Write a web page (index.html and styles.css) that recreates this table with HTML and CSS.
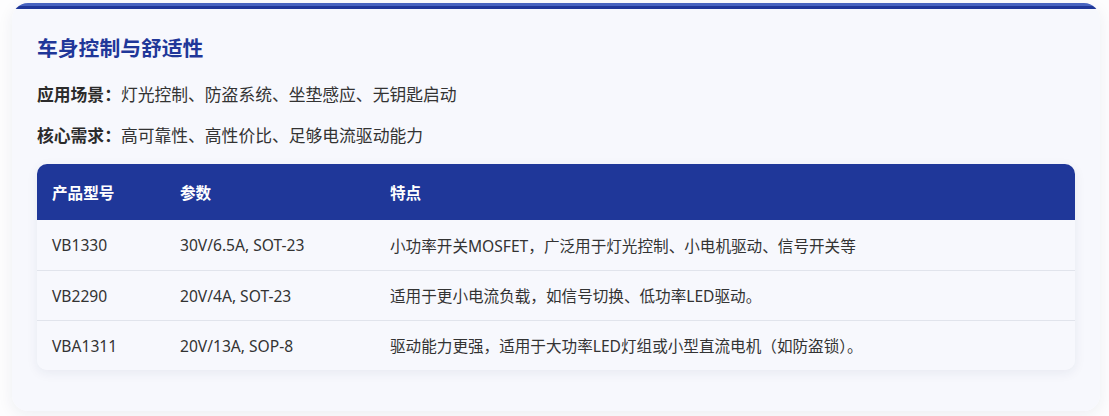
FILE: index.html
```html
<!DOCTYPE html>
<html lang="zh-CN">
<head>
  <meta charset="UTF-8">
  <title>车身控制与舒适性</title>
  <link rel="stylesheet" href="styles.css">
</head>
<body>
  <div class="card">
    <h3>车身控制与舒适性</h3>
    <p><strong>应用场景：</strong>灯光控制、防盗系统、坐垫感应、无钥匙启动</p>
    <p><strong>核心需求：</strong>高可靠性、高性价比、足够电流驱动能力</p>

    <table>
      <thead>
        <tr>
          <th class="col-model">产品型号</th>
          <th class="col-param">参数</th>
          <th>特点</th>
        </tr>
      </thead>
      <tbody>
        <tr>
          <td>VB1330</td>
          <td>30V/6.5A, SOT-23</td>
          <td>小功率开关MOSFET，广泛用于灯光控制、小电机驱动、信号开关等</td>
        </tr>
        <tr>
          <td>VB2290</td>
          <td>20V/4A, SOT-23</td>
          <td>适用于更小电流负载，如信号切换、低功率LED驱动。</td>
        </tr>
        <tr>
          <td>VBA1311</td>
          <td>20V/13A, SOP-8</td>
          <td>驱动能力更强，适用于大功率LED灯组或小型直流电机（如防盗锁）。</td>
        </tr>
      </tbody>
    </table>
  </div>
</body>
</html>
```

FILE: styles.css
```css
body {
  margin: 0;
  padding: 3px 9px 5px 12px;
  background: #fdfdfe;
  font-family: "Noto Sans", "Noto Sans CJK SC", sans-serif;
  color: #333;
}

.card {
  background: linear-gradient(#4763c0 0, #4763c0 3px, #1f3799 3px, #1f3799 6px, #f7f8fd 6px);
  border-radius: 16px;
  padding: 31px 25px 41px;
  box-shadow: 0 4px 16px rgba(30, 40, 90, 0.07);
}

h3 {
  margin: 0 0 19px;
  font-size: 20.8px;
  line-height: 28px;
  color: #1f3799;
}

p {
  margin: 0 0 13px;
  font-size: 16.8px;
  line-height: 28px;
}

p strong {
  color: #2b2b2b;
}

table {
  width: 100%;
  border-collapse: collapse;
  margin-top: 14px;
  border-radius: 10px;
  overflow: hidden;
  box-shadow: 0 3px 12px rgba(30, 40, 90, 0.07);
  font-size: 15.6px;
}

th {
  background: #1f3799;
  color: #fff;
  text-align: left;
  height: 56px;
  padding: 0 15px;
  font-weight: bold;
}

td {
  height: 49px;
  padding: 0 15px;
  background: #f7f8fd;
  border-top: 1px solid #e1e4ec;
  color: #333;
}

tbody tr:first-child td {
  border-top: none;
  height: 50px;
}

.col-model { width: 98px; }
.col-param { width: 180px; }
```
